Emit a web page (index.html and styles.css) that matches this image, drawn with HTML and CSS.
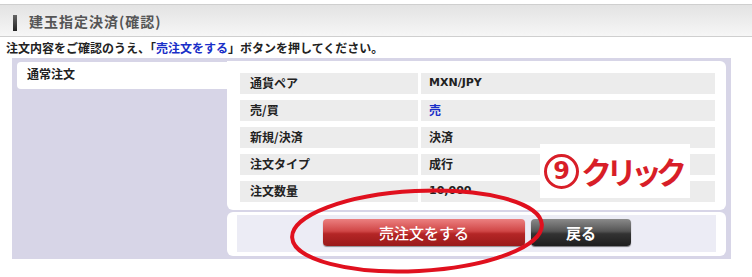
FILE: index.html
```html
<!DOCTYPE html>
<html lang="ja">
<head>
  <meta charset="UTF-8" />
  <title>建玉指定決済(確認)</title>
  <link rel="stylesheet" href="styles.css">
</head>
<body>
  <div class="page-header">
    <span class="marker"></span>
    <h1>建玉指定決済(確認)</h1>
  </div>

  <p class="notice">注文内容をご確認のうえ、「<span class="link">売注文をする</span>」ボタンを押してください。</p>

  <div class="panel">
    <div class="tab">通常注文</div>
    <div class="main">
      <div class="table-box">
        <div class="row"><div class="label">通貨ペア</div><div class="value latin">MXN/JPY</div></div>
        <div class="row"><div class="label">売/買</div><div class="value sell">売</div></div>
        <div class="row"><div class="label">新規/決済</div><div class="value">決済</div></div>
        <div class="row"><div class="label">注文タイプ</div><div class="value">成行</div></div>
        <div class="row"><div class="label">注文数量</div><div class="value latin">10,000</div></div>
      </div>
      <div class="btn-box">
        <div class="btn-fill">
          <button class="btn btn-order">売注文をする</button>
          <button class="btn btn-back">戻る</button>
        </div>
      </div>
    </div>
  </div>

  <!-- annotation -->
  <div class="callout"><span class="num">9</span><span class="word">クリック</span></div>
  <svg class="circle-mark" width="270" height="96" viewBox="0 0 270 96">
    <ellipse cx="130" cy="46" rx="125" ry="40" fill="none" stroke="#e0101e" stroke-width="4" transform="rotate(-3 130 46)"/>
  </svg>
</body>
</html>
```

FILE: styles.css
```css
body {
  margin: 0;
  font-family: "Noto Sans CJK JP", "Noto Sans", sans-serif;
  background: #ffffff;
  color: #222;
  position: relative;
  width: 752px;
  height: 277px;
  overflow: hidden;
}

.page-header {
  margin-top: 4px;
  height: 31px;
  border-top: 1px solid #cfcfcf;
  border-bottom: 1px solid #cfcfcf;
  background: linear-gradient(#e3e3e3, #f6f6f6);
  display: flex;
  align-items: center;
}

.marker {
  width: 4px;
  height: 16px;
  margin: 4px 0 0 13px;
  background: linear-gradient(#666, #222);
}

h1 {
  margin: 0 0 0 12px;
  font-size: 14px;
  font-weight: bold;
  color: #555;
  letter-spacing: 1px;
}

.notice {
  margin: 0;
  padding: 3px 0 0 6px;
  height: 18px;
  font-size: 12px;
  line-height: 15px;
  font-weight: bold;
}

.link {
  color: #1a2fc8;
}

.panel {
  margin-left: 12px;
  width: 709px;
  padding: 3px 5px;
  background: #d7d5e7;
  display: flex;
}

.tab {
  width: 200px;
  height: 27px;
  margin-top: 1px;
  padding-left: 10px;
  background: #fff;
  border-radius: 4px 0 0 4px;
  font-size: 12px;
  font-weight: bold;
  line-height: 24px;
}

.main {
  width: 499px;
  display: flex;
  flex-direction: column;
  gap: 2px;
}

.table-box {
  background: #fff;
  border-radius: 0 6px 6px 6px;
  padding: 12px 11px 8px 13px;
  display: flex;
  flex-direction: column;
  gap: 6px;
}

.row {
  display: grid;
  grid-template-columns: 178px 1fr;
  gap: 3px;
  height: 21px;
}

.label, .value {
  background: #ececec;
  font-size: 12px;
  font-weight: bold;
  line-height: 20px;
}

.label {
  padding-left: 10px;
}

.value {
  padding-left: 8px;
}

.latin {
  font-family: "DejaVu Sans", sans-serif;
  font-size: 11px;
}

.sell {
  color: #1a2fc8;
}

.btn-box {
  background: #fff;
  border-radius: 6px;
  padding: 3px 10px 4px 10px;
}

.btn-fill {
  background: #ececf5;
  height: 37px;
  padding: 4px 0 0 86px;
  box-sizing: border-box;
  display: flex;
  gap: 6px;
}

.btn {
  height: 27px;
  border: none;
  border-radius: 4px;
  color: #fff;
  font-family: "Noto Sans CJK JP", sans-serif;
  font-size: 15px;
  padding: 0;
  cursor: pointer;
}

.btn-order {
  width: 202px;
  font-weight: 500;
  background: linear-gradient(#ec8080 0%, #d04646 45%, #b42626 55%, #9a1a1a 100%);
  box-shadow: 0 1px 1px rgba(0,0,0,0.4);
}

.btn-back {
  width: 100px;
  font-weight: bold;
  background: linear-gradient(#8a8a8a 0%, #555 45%, #333 55%, #1e1e1e 100%);
  box-shadow: 0 1px 1px rgba(0,0,0,0.5);
}

.callout {
  position: absolute;
  left: 540px;
  top: 144px;
  width: 150px;
  height: 54px;
  background: #fff;
  color: #d81e28;
  font-weight: bold;
  padding-left: 4px;
  box-sizing: border-box;
  display: flex;
  align-items: center;
  white-space: nowrap;
}

.num {
  flex-shrink: 0;
  width: 35px;
  height: 35px;
  box-sizing: border-box;
  border: 3px solid #d81e28;
  border-radius: 50%;
  margin-right: 2px;
  font-family: "DejaVu Sans", sans-serif;
  font-size: 24px;
  line-height: 29px;
  text-align: center;
}

.word {
  font-size: 31px;
  letter-spacing: -6px;
  line-height: 34px;
}

.circle-mark {
  position: absolute;
  left: 287px;
  top: 185px;
}
```
